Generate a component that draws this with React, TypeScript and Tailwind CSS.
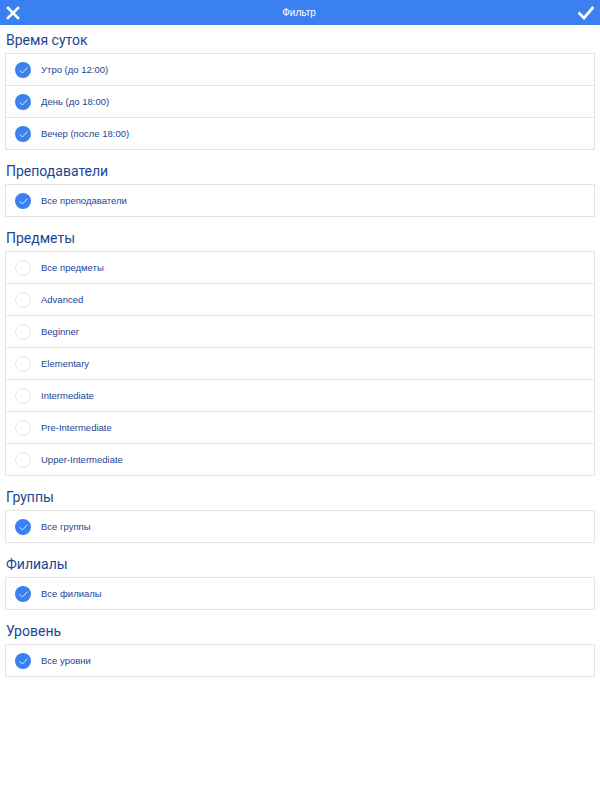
import React, { useState } from 'react';

type Section = { title: string; items: string[]; checked: boolean };

const sections: Section[] = [
  { title: 'Время суток', items: ['Утро (до 12:00)', 'День (до 18:00)', 'Вечер (после 18:00)'], checked: true },
  { title: 'Преподаватели', items: ['Все преподаватели'], checked: true },
  {
    title: 'Предметы',
    items: ['Все предметы', 'Advanced', 'Beginner', 'Elementary', 'Intermediate', 'Pre-Intermediate', 'Upper-Intermediate'],
    checked: false,
  },
  { title: 'Группы', items: ['Все группы'], checked: true },
  { title: 'Филиалы', items: ['Все филиалы'], checked: true },
  { title: 'Уровень', items: ['Все уровни'], checked: true },
];

const Check = ({ on }: { on: boolean }) =>
  on ? (
    <span className="w-4 h-4 rounded-full bg-[#3a80f0] flex items-center justify-center shrink-0">
      <svg width="9" height="7" viewBox="0 0 9 7" fill="none">
        <path d="M1 3.6 L3.4 6 L8 1" stroke="#dbe8fd" strokeWidth="1" strokeLinecap="round" strokeLinejoin="round" />
      </svg>
    </span>
  ) : (
    <span className="w-4 h-4 rounded-full border border-[#e6e6e6] bg-white shrink-0" />
  );

export default function App() {
  const [state, setState] = useState(() => sections.map(s => s.items.map(() => s.checked)));

  const toggle = (si: number, ii: number) =>
    setState(prev => prev.map((row, a) => (a === si ? row.map((v, b) => (b === ii ? !v : v)) : row)));

  return (
    <div className="w-[600px] h-[800px] bg-white" style={{ fontFamily: '"Liberation Sans", Arial, sans-serif' }}>
      {/* Top bar */}
      <div className="h-[25px] bg-[#3a80f0] flex items-center justify-between px-[6px]">
        <svg width="14" height="14" viewBox="0 0 14 14">
          <path d="M2 2 L12 12 M12 2 L2 12" stroke="#fff" strokeWidth="2.6" strokeLinecap="square" />
        </svg>
        <span className="text-white text-[10px]">Фильтр</span>
        <svg width="16" height="14" viewBox="0 0 16 14">
          <path d="M1.5 7.5 L6 12 L14.5 2" stroke="#fff" strokeWidth="2.8" fill="none" strokeLinecap="square" />
        </svg>
      </div>

      {sections.map((s, si) => (
        <div key={s.title} className={si === 0 ? '' : 'mt-[6px]'}>
          <div className="px-[6px] pt-[5px] pb-[3px] text-[14px] leading-[20px] text-[#1c4594] font-[Roboto,sans-serif]">
            {s.title}
          </div>
          <div className="mx-[5px] border-x border-t border-[#e4e4e4]">
            {s.items.map((it, ii) => (
              <div
                key={it}
                onClick={() => toggle(si, ii)}
                className="h-[32px] flex items-center gap-[10px] pl-[9px] pt-[1px] cursor-pointer border-b border-[#e4e4e4]"
              >
                <Check on={state[si][ii]} />
                <span className="text-[9.5px] text-[#1c4594]">{it}</span>
              </div>
            ))}
          </div>
        </div>
      ))}
    </div>
  );
}
